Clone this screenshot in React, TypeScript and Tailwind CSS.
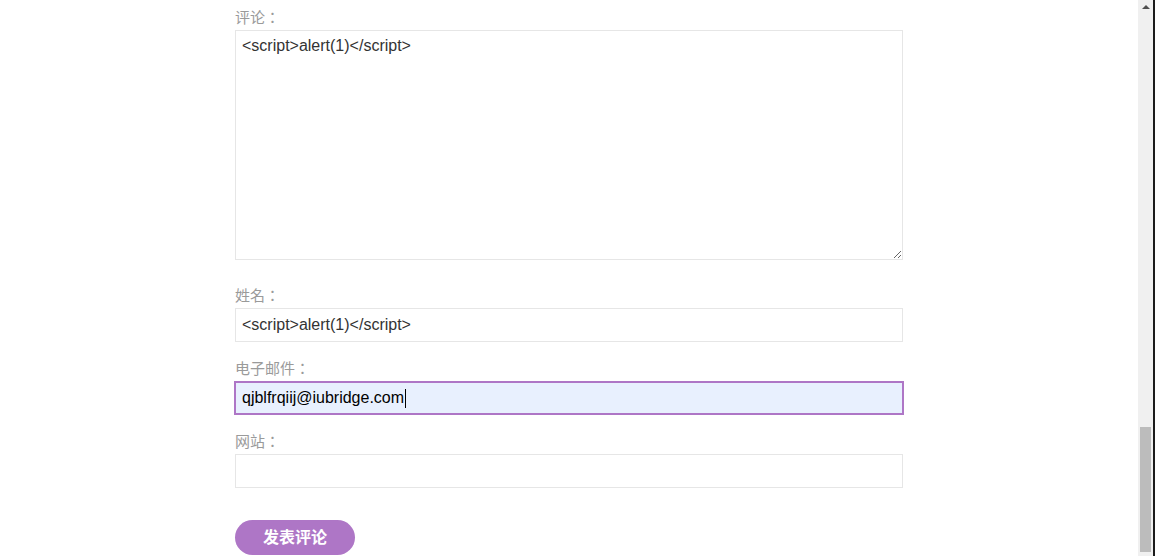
const labelCls =
  "block text-[15px] leading-[22px] text-[#9a9a9a] mb-[2px] font-['Noto_Sans_CJK_TC','Noto_Sans_CJK_SC',sans-serif]";
const fieldCls =
  "block w-full h-[34px] border border-[#e6e6e6] bg-white px-[6px] text-[16px] text-[#333] outline-none font-['Liberation_Sans',Arial,sans-serif]";

function Field({ label, value }: { label: string; value: string }) {
  return (
    <div>
      <label className={labelCls}>{label}</label>
      <input className={fieldCls} defaultValue={value} readOnly />
    </div>
  );
}

function Scrollbar() {
  return (
    <div className="flex h-full shrink-0">
      <div className="flex w-[15px] flex-col justify-between bg-[#f0f0f0] pb-[4px]">
        <div className="flex justify-center pt-[5px]">
          <div className="h-0 w-0 border-x-[4px] border-b-[4px] border-x-transparent border-b-[#505050]" />
        </div>
        <div className="mx-[2px] h-[125px] bg-[#bcbcbc]" />
      </div>
      <div className="w-[2px] bg-[#1b1b1b]" />
    </div>
  );
}

export default function App() {
  return (
    <div className="flex h-[556px] w-full overflow-hidden bg-white">
      <div className="flex-1">
        <div className="ml-[235px] w-[668px] pt-[6px]">
          <label className={labelCls}>评论：</label>
          <textarea
            className="block h-[230px] w-full resize-y border border-[#e6e6e6] bg-white px-[6px] pt-[3px] text-[16px] leading-[24px] text-[#333] outline-none font-['Liberation_Sans',Arial,sans-serif]"
            defaultValue="<script>alert(1)</script>"
            readOnly
          />

          <div className="mt-[24px] flex flex-col gap-[15px]">
            <Field label="姓名：" value="<script>alert(1)</script>" />

            <div>
              <label className={labelCls}>电子邮件：</label>
              <div className="-mx-[1px] flex h-[34px] items-center border-2 border-[#ae76c6] bg-[#e8f0fe] px-[6px] text-[16px] text-black font-['Liberation_Sans',Arial,sans-serif]">
                <span>qjblfrqiij@iubridge.com</span>
                <span className="ml-[1px] h-[19px] w-[1px] bg-black" />
              </div>
            </div>

            <Field label="网站：" value="" />
          </div>

          <button className="mt-[32px] h-[35px] w-[120px] rounded-full bg-[#ae76c6] pb-[3px] text-[16px] font-bold text-white font-['Noto_Sans_CJK_SC','Noto_Sans',sans-serif]">
            发表评论
          </button>
        </div>
      </div>
      <Scrollbar />
    </div>
  );
}
